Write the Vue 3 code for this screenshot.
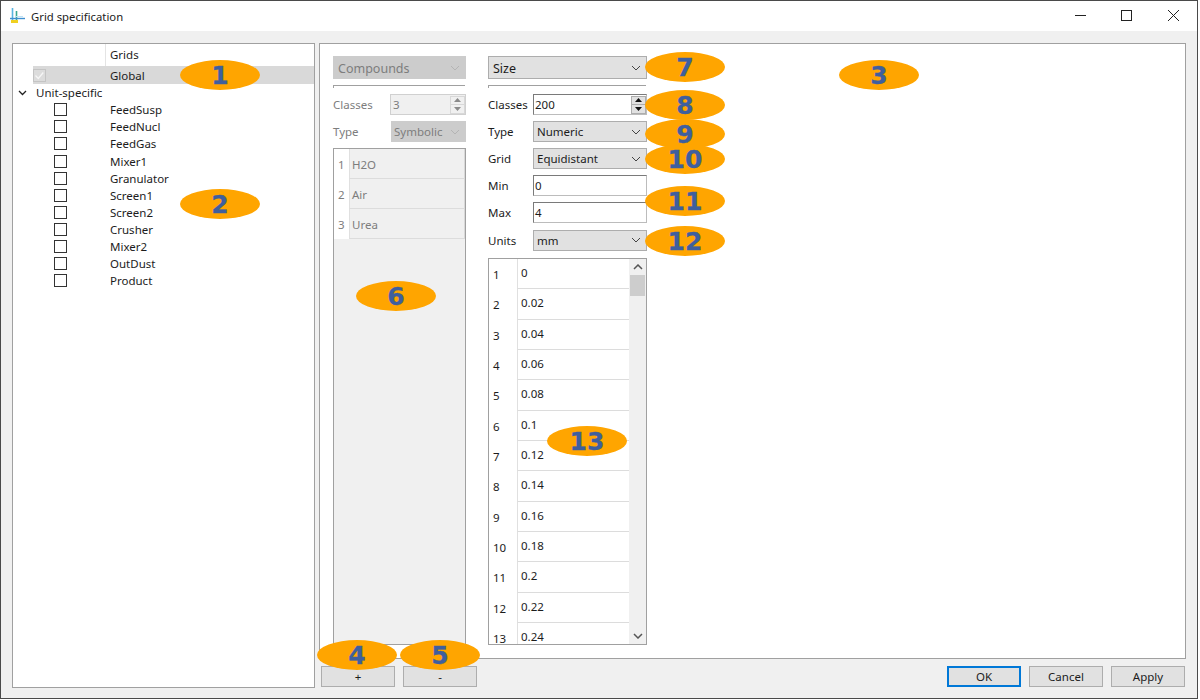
<script setup>
const units = ['FeedSusp','FeedNucl','FeedGas','Mixer1','Granulator','Screen1','Screen2','Crusher','Mixer2','OutDust','Product']
const compounds = ['H2O','Air','Urea']
const values = ['0','0.02','0.04','0.06','0.08','0.1','0.12','0.14','0.16','0.18','0.2','0.22','0.24']
const marks = [
  ['1',220,75],['2',220,204],['3',879,75],['4',357,655],['5',440,655],['6',396,296],['7',685,67],
  ['8',685,105],['9',685,134],['10',685,159],['11',685,201],['12',685,241],['13',587,441]
]
</script>

<template>
  <div class="window">
    <header class="titlebar">
      <svg class="appicon" width="16" height="17" viewBox="0 0 16 17">
        <path d="M2.500 0v15" stroke="#58b4e0" stroke-width="1.600" fill="none"/>
        <path d="M6.500 3v12" stroke="#3aa890" stroke-width="1.600" fill="none"/>
        <path d="M0 10.500h15" stroke="#3f8fd0" stroke-width="1.400" fill="none"/>
        <path d="M6 8.500h7" stroke="#bfe2f4" stroke-width="1" fill="none"/>
        <path d="M1 13.500h7" stroke="#f0d020" stroke-width="3" fill="none"/>
      </svg>
      <span class="title">Grid specification</span>
      <div class="controls">
        <svg width="46" height="30" viewBox="0 0 46 30"><path d="M16 14.500h11" stroke="#222" fill="none"/></svg>
        <svg width="46" height="30" viewBox="0 0 46 30"><rect x="16.500" y="9.500" width="10" height="10" stroke="#222" fill="none"/></svg>
        <svg width="46" height="30" viewBox="0 0 46 30"><path d="M17 9l11 11M28 9L17 20" stroke="#222" fill="none"/></svg>
      </div>
    </header>

    <main class="body">
      <section class="tree">
        <div class="tree-head"><span class="head-gap"></span><span class="head-name">Grids</span></div>
        <div class="tree-row selected">
          <span class="first global-first">
            <svg class="check" width="13" height="13" viewBox="0 0 13 13"><rect x=".5" y=".5" width="12" height="12" fill="#dcdcdc" stroke="#c4c4c4"/><path d="M2.500 6.500l2.800 3 5-6" stroke="#f6f6f6" stroke-width="1.300" fill="none"/></svg>
          </span>
          <span>Global</span>
        </div>
        <div class="tree-row group">
          <svg class="chev" width="9" height="6" viewBox="0 0 9 6"><path d="M1 1l3.500 3.500L8 1" stroke="#222" stroke-width="1.300" fill="none"/></svg>
          <span>Unit-specific</span>
        </div>
        <div v-for="u in units" :key="u" class="tree-row">
          <span class="first unit-first"><span class="box"></span></span>
          <span>{{ u }}</span>
        </div>
      </section>

      <div class="right">
        <section class="panel">
          <div class="col col-left">
            <div class="combo off wide"><span>Compounds</span><svg width="10" height="6" viewBox="0 0 10 6"><path d="M1 1l4 4 4-4" stroke="#b4b4b4" fill="none"/></svg></div>
            <div class="rule"></div>
            <div class="field muted">
              <label>Classes</label>
              <div class="input spin off-input"><span>3</span>
                <span class="spinners off-spin">
                  <i><svg width="7" height="4" viewBox="0 0 7 4"><path d="M3.500 0L7 4H0z" fill="#8a8a8a"/></svg></i>
                  <i><svg width="7" height="4" viewBox="0 0 7 4"><path d="M3.500 4L7 0H0z" fill="#8a8a8a"/></svg></i>
                </span>
              </div>
            </div>
            <div class="field f-gap muted">
              <label>Type</label>
              <div class="combo off narrow"><span>Symbolic</span><svg width="10" height="6" viewBox="0 0 10 6"><path d="M1 1l4 4 4-4" stroke="#b4b4b4" fill="none"/></svg></div>
            </div>
            <div class="table table-off">
              <div v-for="(c,i) in compounds" :key="c" class="row row-off">
                <span class="idx idx-off">{{ i+1 }}</span>
                <span class="cell cell-off">{{ c }}</span>
              </div>
            </div>
          </div>

          <div class="col col-right">
            <div class="combo wide"><span>Size</span><svg width="10" height="6" viewBox="0 0 10 6"><path d="M1 1l4 4 4-4" stroke="#444" fill="none"/></svg></div>
            <div class="rule"></div>
            <div class="field">
              <label>Classes</label>
              <div class="input spin"><span>200</span>
                <span class="spinners">
                  <i><svg width="7" height="4" viewBox="0 0 7 4"><path d="M3.500 0L7 4H0z" fill="#111"/></svg></i>
                  <i><svg width="7" height="4" viewBox="0 0 7 4"><path d="M3.500 4L7 0H0z" fill="#111"/></svg></i>
                </span>
              </div>
            </div>
            <div class="field f-gap">
              <label>Type</label>
              <div class="combo"><span>Numeric</span><svg width="10" height="6" viewBox="0 0 10 6"><path d="M1 1l4 4 4-4" stroke="#444" fill="none"/></svg></div>
            </div>
            <div class="field f-gap">
              <label>Grid</label>
              <div class="combo"><span>Equidistant</span><svg width="10" height="6" viewBox="0 0 10 6"><path d="M1 1l4 4 4-4" stroke="#444" fill="none"/></svg></div>
            </div>
            <div class="field f-gap">
              <label>Min</label>
              <div class="input"><span>0</span></div>
            </div>
            <div class="field f-gap">
              <label>Max</label>
              <div class="input"><span>4</span></div>
            </div>
            <div class="field f-gap f-units">
              <label>Units</label>
              <div class="combo"><span>mm</span><svg width="10" height="6" viewBox="0 0 10 6"><path d="M1 1l4 4 4-4" stroke="#444" fill="none"/></svg></div>
            </div>
            <div class="table table-on">
              <div class="rows">
                <div v-for="(v,i) in values" :key="v" class="row">
                  <span class="idx">{{ i+1 }}</span>
                  <span class="cell">{{ v }}</span>
                </div>
              </div>
              <div class="scroll">
                <svg width="10" height="6" viewBox="0 0 10 6"><path d="M1 5l4-4 4 4" stroke="#555" stroke-width="1.500" fill="none"/></svg>
                <span class="thumb"></span>
                <span class="track"></span>
                <svg width="10" height="6" viewBox="0 0 10 6"><path d="M1 1l4 4 4-4" stroke="#555" stroke-width="1.500" fill="none"/></svg>
              </div>
            </div>
          </div>
        </section>

        <footer class="bottom">
          <div class="btns">
            <button class="btn">+</button>
            <button class="btn">-</button>
          </div>
          <div class="btns">
            <button class="btn ok">OK</button>
            <button class="btn">Cancel</button>
            <button class="btn">Apply</button>
          </div>
        </footer>
      </div>
    </main>

    <div v-for="m in marks" :key="m[0]" class="mark" :style="{ left: m[1] - 40 + 'px', top: m[2] - 15 + 'px' }">{{ m[0] }}</div>
  </div>
</template>

<style>
html, body { background: #fff; }
</style>

<style scoped>
.window {
  position: relative;
  box-sizing: border-box;
  width: 1198px;
  height: 699px;
  border: 1px solid #4a4a4a;
  background: #f0f0f0;
  font-family: "Noto Sans", "Open Sans", sans-serif;
  font-size: 11.500px;
  color: #1c1c1c;
  display: flex;
  flex-direction: column;
  overflow: hidden;
}
.titlebar {
  height: 30px;
  flex: none;
  background: #fff;
  display: flex;
  align-items: center;
  padding-left: 9px;
}
.appicon { margin-right: 5px; }
.title { font-size: 11.300px; color: #222; }
.controls { margin-left: auto; display: flex; }
.controls svg { display: block; }

.body {
  flex: 1;
  display: flex;
  gap: 4px;
  padding: 12px 11px 10px;
  min-height: 0;
}
.tree {
  width: 303px;
  flex: none;
  box-sizing: border-box;
  background: #fff;
  border: 1px solid #a0a0a0;
}
.tree-head { display: flex; height: 22px; }
.head-gap { width: 92px; border-right: 1px solid #e4e4e4; }
.head-name { padding-left: 4px; line-height: 21px; }
.tree-row {
  height: 17.100px;
  display: flex;
  align-items: center;
  line-height: 17px;
}
.first { display: flex; align-items: center; flex: none; box-sizing: border-box; }
.global-first { width: 77px; }
.unit-first { width: 97px; padding-left: 41px; }
.selected { background: #d9d9d9; margin-left: 20px; height: 18.100px; }
.group { padding-left: 5px; gap: 9px; }
.chev { flex: none; }
.box {
  width: 13px;
  height: 13px;
  box-sizing: border-box;
  border: 1px solid #333;
  background: #fff;
}
.check { display: block; }

.right { flex: 1; display: flex; flex-direction: column; min-width: 0; }
.panel {
  flex: none;
  height: 616px;
  box-sizing: border-box;
  background: #fff;
  border: 1px solid #a0a0a0;
  display: flex;
  gap: 22px;
  padding: 12px 0 0 13px;
}
.col { display: flex; flex-direction: column; }
.col-left { width: 133px; }
.col-right { width: 159px; }

.combo {
  box-sizing: border-box;
  width: 114px;
  height: 21px;
  background: #e1e1e1;
  border: 1px solid #adadad;
  display: flex;
  align-items: center;
  justify-content: space-between;
  padding: 0 5px 0 3px;
}
.combo.wide { width: 100%; height: 23px; font-size: 12.500px; padding: 1px 5px 0 4px; }
.combo.off { background: #ccc; border-color: #ccc; color: #7d7d7d; }
.combo.narrow { width: 75px; padding-left: 2px; }
.rule {
  height: 1px;
  margin: 6px 1px 8px 0;
  background: #a0a0a0;
  position: relative;
}
.rule::before { content: ""; position: absolute; left: 0; top: 0; width: 1px; height: 3px; background: #a0a0a0; }

.field { display: flex; align-items: center; justify-content: space-between; height: 21px; flex: none; }
.muted { color: #7d7d7d; }
.f-gap { margin-top: 6px; }
.f-units { height: 22px; }
.input {
  box-sizing: border-box;
  width: 114px;
  height: 21px;
  background: #fff;
  border: 1px solid #7a7a7a;
  border-right-color: #bcbcbc;
  border-bottom-color: #bcbcbc;
  display: flex;
  align-items: center;
  padding-left: 1px;
}
.spin { justify-content: space-between; }
.off-input { width: 76px; background: #f0f0f0; border-color: #d0d0d0; padding-left: 2px; }
.spinners {
  display: flex;
  flex-direction: column;
  width: 15px;
  height: 18px;
}
.spinners i {
  flex: 1;
  display: flex;
  align-items: center;
  justify-content: center;
  background: #e1e1e1;
  border: 1px solid #adadad;
}
.spinners i + i { margin-top: -1px; }
.off-spin i { background: #f0f0f0; border-color: #d8d8d8; }

.table {
  box-sizing: border-box;
  border: 1px solid #a0a0a0;
  overflow: hidden;
  margin-top: 6px;
}
.table-off { height: 497px; background: #f0f0f0; }
.table-on { display: flex; height: 387px; margin-top: 7px; background: #fff; }
.rows { flex: 1; min-width: 0; overflow: hidden; }
.row { display: flex; height: 30.330px; }
.row-off { height: 30px; }
.idx {
  flex: none;
  width: 28px;
  padding-left: 4px;
  box-sizing: border-box;
  background: #fff;
  line-height: 31px;
}
.cell {
  flex: 1;
  border-left: 1px solid #e0e0e0;
  border-bottom: 1px solid #dcdcdc;
  padding: 6px 0 0 3px;
  line-height: 16px;
}
.idx-off { width: 15px; color: #7d7d7d; }
.cell-off { color: #7d7d7d; padding: 8px 0 0 2px; background: #f0f0f0; border-right: 1px solid #d8d8d8; }

.scroll {
  width: 17px;
  flex: none;
  background: #f0f0f0;
  display: flex;
  flex-direction: column;
  align-items: center;
  padding: 5px 0;
  box-sizing: border-box;
}
.thumb { width: 15px; height: 21px; background: #cdcdcd; margin-top: 5px; flex: none; }
.track { flex: 1; }

.bottom { flex: 1; display: flex; justify-content: space-between; padding: 7px 1px 0 2px; }
.btns { display: flex; gap: 8px; }
.btn {
  box-sizing: border-box;
  width: 74px;
  height: 21px;
  background: #e1e1e1;
  border: 1px solid #adadad;
  font: inherit;
  color: #1c1c1c;
  padding: 0;
  line-height: 18px;
}
.ok { border: 2px solid #0078d7; }

.mark {
  position: absolute;
  margin: -1px 0 0 -1px;
  width: 80px;
  height: 30px;
  border-radius: 50%;
  background: #ffa500;
  color: #3f5f9e;
  font-family: "DejaVu Sans", sans-serif;
  font-weight: 700;
  font-size: 25px;
  line-height: 32px;
  text-align: center;
  -webkit-text-stroke: 0.3px #3f5f9e;
}
</style>
